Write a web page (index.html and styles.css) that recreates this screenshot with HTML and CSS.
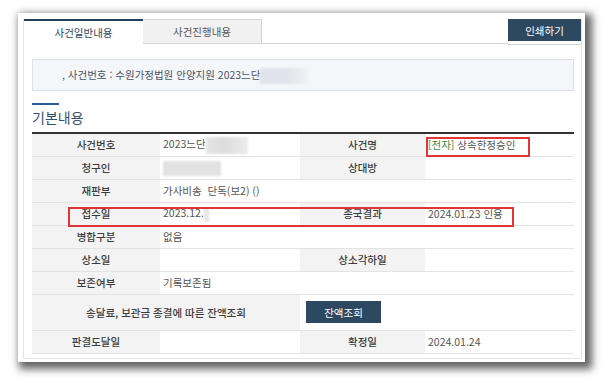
FILE: index.html
```html
<!DOCTYPE html>
<html lang="ko">
  <head>
    <meta charset="UTF-8" />
    <title>사건일반내용</title>
    <link rel="stylesheet" href="styles.css">
  </head>
  <body>
    <div class="window">
      <div class="frame">

        <!-- tabs -->
        <div class="tabbar">
          <div class="tab active">사건일반내용</div>
          <div class="tab">사건진행내용</div>
          <div class="tab-space"></div>
          <button class="btn-dark print">인쇄하기</button>
        </div>

        <div class="content">
          <div class="casebox">
            , 사건번호 : 수원가정법원 안양지원 2023느단<span class="mask mask-case"></span>
          </div>

          <div class="section-title">기본내용</div>

          <div class="info">
            <table>
              <colgroup>
                <col class="c-label1">
                <col class="c-val1">
                <col class="c-label2">
                <col class="c-val2">
              </colgroup>
              <tr>
                <th>사건번호</th>
                <td>2023느단<span class="mask mask-no"></span></td>
                <th>사건명</th>
                <td><span class="green">[전자]</span> 상속한정승인</td>
              </tr>
              <tr>
                <th>청구인</th>
                <td><span class="mask mask-name"></span></td>
                <th>상대방</th>
                <td></td>
              </tr>
              <tr>
                <th>재판부</th>
                <td colspan="3">가사비송&nbsp;&nbsp;단독(보2) ()</td>
              </tr>
              <tr>
                <th>접수일</th>
                <td>2023.12.<span class="mask mask-day"></span></td>
                <th>종국결과</th>
                <td>2024.01.23 인용</td>
              </tr>
              <tr>
                <th>병합구분</th>
                <td colspan="3">없음</td>
              </tr>
              <tr>
                <th>상소일</th>
                <td></td>
                <th>상소각하일</th>
                <td></td>
              </tr>
              <tr>
                <th>보존여부</th>
                <td colspan="3">기록보존됨</td>
              </tr>
              <tr class="tall">
                <th colspan="2">송달료, 보관금 종결에 따른 잔액조회</th>
                <td colspan="2" class="btn-cell"><button class="btn-dark balance">잔액조회</button></td>
              </tr>
              <tr>
                <th>판결도달일</th>
                <td></td>
                <th>확정일</th>
                <td>2024.01.24</td>
              </tr>
            </table>

            <!-- red highlight boxes -->
            <div class="mark mark-name"></div>
            <div class="mark mark-date"></div>
          </div>
        </div>

      </div>
    </div>
  </body>
</html>
```

FILE: styles.css
```css
* {
  margin: 0;
  padding: 0;
  box-sizing: border-box;
}

body {
  width: 606px;
  height: 382px;
  background-color: #ffffff;
  font-family: "Noto Sans CJK KR", "Noto Sans", sans-serif;
  font-size: 10.5px;
  color: #555;
  overflow: hidden;
}

.window {
  margin: 13px 0 0 18px;
  width: 567px;
  height: 349px;
  background-color: #fff;
  padding: 6px 3px 3px 5px;
  box-shadow: 4px 4px 8px 3px rgba(0, 0, 0, 0.62);
}

.frame {
  height: 100%;
  border-left: 1px solid #e4e4e4;
  border-right: 1px solid #e4e4e4;
  border-bottom: 1px solid #e4e4e4;
}

/* tabs */
.tabbar {
  display: flex;
  height: 25px;
}
.tab {
  width: 119px;
  height: 25px;
  line-height: 23px;
  text-align: center;
  background-color: #f1f1f1;
  color: #555;
  border-top: 1px solid #d4d4d4;
  border-right: 1px solid #d4d4d4;
  border-bottom: 1px solid #d4d4d4;
}
.tab.active {
  background-color: #fff;
  color: #2d4763;
  border-top: 2px solid #243f5c;
  border-right: none;
  border-bottom: none;
}
.tab-space {
  flex: 1;
  border-bottom: 1px solid #d4d4d4;
}
.btn-dark {
  background-color: #2d4962;
  color: #fff;
  border: none;
  font-family: "Noto Sans CJK KR", sans-serif;
  font-size: 10.5px;
}
.print {
  width: 73px;
  height: 25px;
  border-bottom: 3px solid #fff;
  box-shadow: 0 1px 0 #d4d4d4;
}

.content {
  padding: 15px 7px 0 8px;
}

.casebox {
  height: 32px;
  line-height: 30px;
  background-color: #f4f6f9;
  border: 1px solid #dde1e6;
  padding-left: 29px;
  color: #4a5568;
}

.mask {
  display: inline-block;
  vertical-align: middle;
  background-color: #e4e4e6;
  filter: blur(1px);
}
.mask-case {
  width: 48px;
  height: 16px;
  background: linear-gradient(to right, #e2e3ea 55%, #f0f1f5);
}
.mask-no {
  width: 42px;
  height: 17px;
  background: linear-gradient(to right, #e6e6e6, #dcdcdc 40%, #ececec);
}
.mask-name {
  width: 58px;
  height: 15px;
  background-color: #e2e2e2;
}
.mask-day {
  width: 5px;
  height: 14px;
  background-color: #e6e6e6;
}

.section-title {
  margin-top: 12px;
  padding-top: 2px;
  border-top: 2px solid #2c5a94;
  width: 27px;
  white-space: nowrap;
  font-size: 14px;
  color: #34506f;
  height: 29px;
  line-height: 20px;
}

.info {
  position: relative;
}

table {
  width: 542px;
  border-collapse: collapse;
  table-layout: fixed;
  border-top: 2px solid #333;
}
.c-label1 { width: 128px; }
.c-val1 { width: 140px; }
.c-label2 { width: 125px; }
.c-val2 { width: 149px; }

th, td {
  height: 23px;
  border-bottom: 1px solid #e3e3e3;
  white-space: nowrap;
}
th {
  background-color: #f3f3f3;
  color: #3c3c3c;
  font-weight: 500;
  text-align: center;
}
td {
  padding-left: 3px;
  color: #555;
}
tr.tall th,
tr.tall td {
  height: 36px;
}
.btn-cell {
  padding-left: 6px;
}
.balance {
  width: 75px;
  height: 22px;
}

.green {
  color: #3b8a3b;
}

.mark {
  position: absolute;
  border: 2px solid #e23434;
}
.mark-name {
  left: 394px;
  top: 5px;
  width: 104px;
  height: 20px;
}
.mark-date {
  left: 36px;
  top: 75px;
  width: 446px;
  height: 20px;
}
```
